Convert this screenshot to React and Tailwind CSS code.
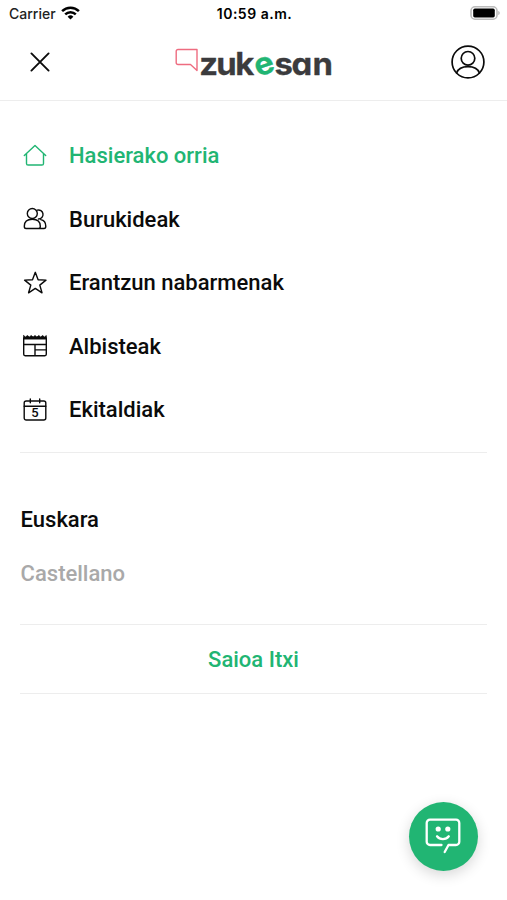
const stroke = {
  fill: "none",
  stroke: "currentColor",
  strokeLinecap: "round",
  strokeLinejoin: "round",
};

function HomeIcon() {
  return (
    <svg className="h-6 w-6" viewBox="0 0 24 24" strokeWidth="1.4" {...stroke}>
      <path d="M1.3 11.5 12 1.6 22.7 11.5M3.5 9.6v9.8a1.6 1.6 0 0 0 1.6 1.6h13.8a1.6 1.6 0 0 0 1.6-1.6V9.6" />
    </svg>
  );
}

function PeopleIcon() {
  return (
    <svg className="h-6 w-6" viewBox="0 0 24 24" strokeWidth="1.4" {...stroke}>
      <circle cx="9.3" cy="6.5" r="5" />
      <path d="M1.3 19.2c0-4.6 3-7 8-7s8 2.4 8 7c0 1.8-.4 2.3-1.8 2.3H3.1c-1.4 0-1.8-.5-1.8-2.3zM14.2 3.2a4.5 4.5 0 1 1 1.2 8.8M17.8 12.6c3.3.6 5 3 5 6.6 0 1.8-.4 2.3-1.8 2.3h-5.5" />
    </svg>
  );
}

function StarIcon() {
  return (
    <svg className="h-6 w-6" viewBox="0 0 24 24" strokeWidth="1.4" {...stroke}>
      <path d="m12.3 1.3 2.8 7.5 7.9.3-6.2 5 2.2 7.7-6.7-4.4-6.7 4.4 2.2-7.7-6.2-5 7.9-.3z" />
    </svg>
  );
}

function NewsIcon() {
  return (
    <svg className="h-6 w-6" viewBox="0 0 24 24" strokeWidth="1.4" {...stroke}>
      <path d="M.7 4v16.3a1.4 1.4 0 0 0 1.4 1.4h19.8a1.4 1.4 0 0 0 1.4-1.4V4M.7 10.5h22.6M12 10.5v11.2M12 15.9h11.3" />
      <path
        d="M.7 1.6 2.5 3 4.4 1.6 6.3 3 8.2 1.6 10.1 3 12 1.6 13.9 3l1.9-1.4L17.7 3l1.9-1.4L21.5 3l1.8-1.4v3.5H.7z"
        fill="currentColor"
        strokeWidth=".8"
      />
    </svg>
  );
}

function CalendarIcon() {
  return (
    <svg className="h-6 w-6" viewBox="0 0 24 24" strokeWidth="1.4" {...stroke}>
      <rect x="1.2" y="3" width="21.6" height="19" rx="2" />
      <path d="M1.2 8.2h21.6M7.3 1v3.8M16.7 1v3.8" />
      <text
        x="12"
        y="19.3"
        fill="currentColor"
        stroke="none"
        textAnchor="middle"
        className="font-['Roboto',sans-serif] text-[13px] font-medium"
      >
        5
      </text>
    </svg>
  );
}

const menuItems = [
  { label: "Hasierako orria", icon: HomeIcon, active: true },
  { label: "Burukideak", icon: PeopleIcon },
  { label: "Erantzun nabarmenak", icon: StarIcon },
  { label: "Albisteak", icon: NewsIcon },
  { label: "Ekitaldiak", icon: CalendarIcon },
];

function StatusBar() {
  return (
    <div className="grid h-[27px] grid-cols-3 items-center pl-[9px] pr-[7px] font-['Inter',sans-serif] text-black">
      <div className="flex items-center gap-[5px]">
        <span className="text-[14px] text-[#222]">Carrier</span>
        <svg className="-mt-0.5 h-[14px] w-[19px]" viewBox="0 0 19 14" fill="none" stroke="currentColor" strokeWidth="2.5">
          <path d="M1.1 5.1a12 12 0 0 1 16.8 0M4.2 8.3a7.6 7.6 0 0 1 10.6 0" />
          <path d="M9.5 13.6 6.6 10.7a4.2 4.2 0 0 1 5.8 0z" fill="currentColor" stroke="none" />
        </svg>
      </div>
      <span className="text-center text-[14px] font-semibold tracking-[0.5px]">10:59 a.m.</span>
      <svg className="-mt-px h-[14px] w-[30px] justify-self-end" viewBox="0 0 30 14">
        <rect x="1" y=".8" width="26" height="12.4" rx="4" fill="#fff" stroke="#bcbcbc" strokeWidth="1.6" />
        <rect x="3.2" y="2.6" width="21.6" height="8.8" rx="1.6" fill="#000" />
        <path d="M28.3 5v4c1.8-.6 1.8-3.4 0-4z" fill="#b0b0b0" />
      </svg>
    </div>
  );
}

function Logo() {
  return (
    <div className="mr-2 mt-[5px] flex items-start">
      <svg className="mt-[2px] h-6 w-6" viewBox="0 0 24 24" fill="none" stroke="#ee6c80" strokeWidth="1.4" strokeLinejoin="round">
        <path d="M3 1.5h19v21L15.5 16.5H3a1.8 1.8 0 0 1-1.8-1.8V3.3A1.8 1.8 0 0 1 3 1.5z" />
      </svg>
      <svg className="h-9 w-[134px] overflow-visible" viewBox="0 0 134 36">
        <g
          className="font-['Inter',sans-serif] text-[31px] font-bold [font-feature-settings:'cv11']"
          fill="#3b3b3d"
          stroke="#3b3b3d"
          strokeWidth=".3"
          strokeLinejoin="round"
          transform="scale(1.06 1)"
        >
          <text x="0.3 16.2 34.3" y="28.5">zuk</text>
          <text x="52.5" y="28.5" fill="#21b573" stroke="#21b573" transform="rotate(-20 61.5 20)">e</text>
          <text x="71.2 87.2 107" y="28.5">san</text>
        </g>
      </svg>
    </div>
  );
}

function Header() {
  return (
    <header className="flex h-[74px] items-center justify-between border-b border-[#ededed] pl-[30px] pr-[22px] pb-[4px]">
      <button type="button" aria-label="Itxi" className="w-[35px]">
        <svg className="h-5 w-5" viewBox="0 0 20 20" strokeWidth="1.9" {...stroke}>
          <path d="m1.4 1.4 17.2 17.2M18.6 1.4 1.4 18.6" />
        </svg>
      </button>
      <Logo />
      <button type="button" aria-label="Profila">
        <svg className="h-[34px] w-[34px]" viewBox="0 0 34 34" strokeWidth="1.7" {...stroke}>
          <circle cx="17" cy="17" r="15.9" />
          <circle cx="17" cy="13.3" r="6.8" />
          <path d="M5.6 28c1.5-4.3 4.8-6.3 11.4-6.3S26.9 23.7 28.4 28" />
        </svg>
      </button>
    </header>
  );
}

export default function App() {
  return (
    <div className="relative h-[900px] w-[507px] overflow-hidden bg-white font-['Roboto',sans-serif] text-[22px] font-medium text-[#0b0b0b]">
      <StatusBar />
      <Header />

      <main className="px-5">
        <nav className="border-b border-[#ededed] pt-[23px] pb-[10.5px]">
          {menuItems.map(({ label, icon: Icon, active }) => (
            <a key={label} href="#" className={`flex h-[63.5px] items-center gap-[22px] pl-[3px] ${active ? "text-[#21b573]" : ""}`}>
              <Icon />
              <span>{label}</span>
            </a>
          ))}
        </nav>

        <div className="flex flex-col gap-[21px] border-b border-[#ededed] pt-[50px] pb-[34px] pl-[0.6px] leading-[33px]">
          <button type="button" className="text-left">Euskara</button>
          <button type="button" className="text-left text-[#a9a9a9]">Castellano</button>
        </div>

        <button type="button" className="h-[69px] w-full border-b border-[#ededed] pt-px text-[#21b573]">
          Saioa Itxi
        </button>
      </main>

      <button
        type="button"
        aria-label="Txata"
        className="absolute left-[409px] top-[802px] flex h-[69px] w-[69px] items-center justify-center rounded-full bg-[#21b573] text-white shadow-[0_4px_14px_rgba(0,0,0,0.16)]"
      >
        <svg className="-mt-px mr-px h-9 w-9" viewBox="0 0 36 36" strokeWidth="2.3" {...stroke}>
          <path d="M16.5 27H5a3.3 3.3 0 0 1-3.3-3.3V5A3.3 3.3 0 0 1 5 1.7h26A3.3 3.3 0 0 1 34.3 5v18.7A3.3 3.3 0 0 1 31 27h-7.500l-3.800 7" />
          <path d="M12 18.3c2.800 3.700 9 3.700 11.800 0" />
          <circle cx="13.2" cy="11" r="2.6" fill="currentColor" stroke="none" />
          <circle cx="22.8" cy="11" r="2.6" fill="currentColor" stroke="none" />
        </svg>
      </button>
    </div>
  );
}
